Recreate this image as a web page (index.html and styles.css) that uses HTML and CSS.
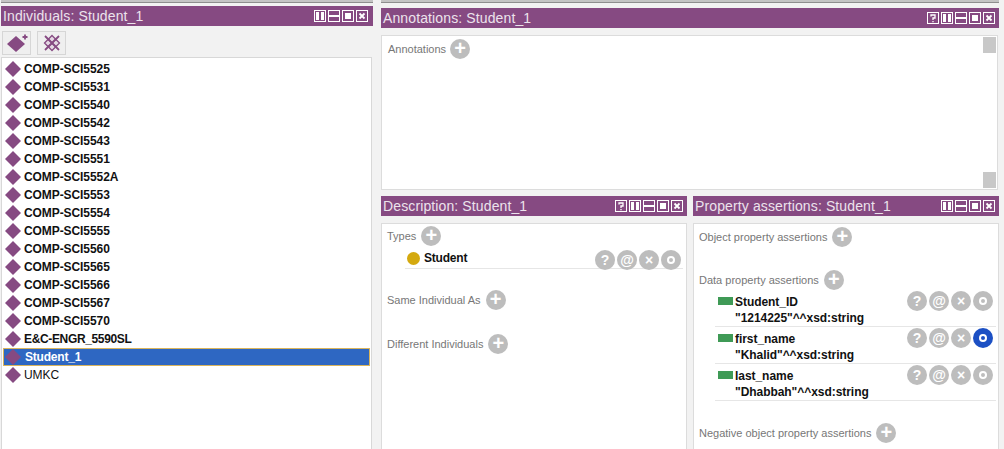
FILE: index.html
```html
<!DOCTYPE html>
<html lang="en">
<head>
<meta charset="utf-8">
<title>Individuals: Student_1</title>
<link rel="stylesheet" href="styles.css">
</head>
<body>
<svg class="defs" width="0" height="0" aria-hidden="true">
  <symbol id="w-help" viewBox="0 0 12 12"><rect x=".5" y=".5" width="11" height="11" fill="none" stroke="#fff"/><path d="M4 4.500V3h4V6H6v2M6 9v1.200" fill="none" stroke="#fff" stroke-width="1.300"/></symbol>
  <symbol id="w-vsplit" viewBox="0 0 12 12"><rect x=".5" y=".5" width="11" height="11" fill="none" stroke="#fff"/><rect x="2" y="2" width="3" height="8" fill="#fff"/><rect x="7" y="2" width="3" height="8" fill="#fff"/></symbol>
  <symbol id="w-hsplit" viewBox="0 0 12 12"><rect x=".5" y=".5" width="11" height="11" fill="none" stroke="#fff"/><rect x="1" y="5" width="10" height="2" fill="#fff"/></symbol>
  <symbol id="w-max" viewBox="0 0 12 12"><rect x=".5" y=".5" width="11" height="11" fill="none" stroke="#fff"/><rect x="3" y="3" width="6" height="6" fill="#fff"/></symbol>
  <symbol id="w-close" viewBox="0 0 12 12"><rect x=".5" y=".5" width="11" height="11" fill="none" stroke="#fff"/><path d="M3.500 3.500l5 5M8.500 3.500l-5 5" stroke="#fff" stroke-width="1.800"/></symbol>
  <symbol id="ind" viewBox="0 0 16 16"><path d="M8 0 16 8 8 16 0 8z" fill="#864a82"/></symbol>
</svg>

<div class="topstrip">
  <div class="tab tab-left"></div>
  <div class="tab tab-right"></div>
</div>

<main class="app">
  <section class="left">
    <header class="bar">
      <span class="bar-title">Individuals: Student_1</span>
      <span class="bar-icons">
        <svg><use href="#w-vsplit"/></svg><svg><use href="#w-hsplit"/></svg><svg><use href="#w-max"/></svg><svg><use href="#w-close"/></svg>
      </span>
    </header>
    <div class="toolbar">
      <button class="tool" type="button" aria-label="Add individual">
        <svg width="27" height="21" viewBox="0 0 27 21"><path d="M13 3 22 11 13 19 4 11z" fill="#864a82"/><path d="M22 1.500v5M19.500 4h5" stroke="#864a82" stroke-width="1.800"/></svg>
      </button>
      <button class="tool" type="button" aria-label="Delete individual">
        <svg width="20" height="20" viewBox="0 0 20 20"><path d="M10 2.500 17.500 10 10 17.500 2.500 10z" fill="#e4d8e3" stroke="#864a82" stroke-width="1.300"/><path d="M6.200 6.200 13.800 13.800M13.800 6.200 6.200 13.800" stroke="#864a82" stroke-width="1.300" fill="none"/><path d="M3 3 17 17M17 3 3 17" stroke="#864a82" stroke-width="1.800"/></svg>
      </button>
    </div>
    <ul class="list">
      <li class="row"><svg class="gem"><use href="#ind"/></svg>COMP-SCI5525</li>
      <li class="row"><svg class="gem"><use href="#ind"/></svg>COMP-SCI5531</li>
      <li class="row"><svg class="gem"><use href="#ind"/></svg>COMP-SCI5540</li>
      <li class="row"><svg class="gem"><use href="#ind"/></svg>COMP-SCI5542</li>
      <li class="row"><svg class="gem"><use href="#ind"/></svg>COMP-SCI5543</li>
      <li class="row"><svg class="gem"><use href="#ind"/></svg>COMP-SCI5551</li>
      <li class="row"><svg class="gem"><use href="#ind"/></svg>COMP-SCI5552A</li>
      <li class="row"><svg class="gem"><use href="#ind"/></svg>COMP-SCI5553</li>
      <li class="row"><svg class="gem"><use href="#ind"/></svg>COMP-SCI5554</li>
      <li class="row"><svg class="gem"><use href="#ind"/></svg>COMP-SCI5555</li>
      <li class="row"><svg class="gem"><use href="#ind"/></svg>COMP-SCI5560</li>
      <li class="row"><svg class="gem"><use href="#ind"/></svg>COMP-SCI5565</li>
      <li class="row"><svg class="gem"><use href="#ind"/></svg>COMP-SCI5566</li>
      <li class="row"><svg class="gem"><use href="#ind"/></svg>COMP-SCI5567</li>
      <li class="row"><svg class="gem"><use href="#ind"/></svg>COMP-SCI5570</li>
      <li class="row tight"><svg class="gem"><use href="#ind"/></svg>E&amp;C-ENGR_5590SL</li>
      <li class="row selected"><svg class="gem"><use href="#ind"/></svg>Student_1</li>
      <li class="row plain"><svg class="gem"><use href="#ind"/></svg>UMKC</li>
    </ul>
  </section>

  <section class="right">
    <div class="annot">
      <header class="bar">
        <span class="bar-title">Annotations: Student_1</span>
        <span class="bar-icons">
          <svg><use href="#w-help"/></svg><svg><use href="#w-vsplit"/></svg><svg><use href="#w-hsplit"/></svg><svg><use href="#w-max"/></svg><svg><use href="#w-close"/></svg>
        </span>
      </header>
      <div class="panel annot-panel">
        <div class="sec"><span>Annotations</span><i class="plus">+</i></div>
        <div class="scroll">
          <span class="thumb"></span>
          <span class="thumb"></span>
        </div>
      </div>
    </div>

    <div class="lower">
      <div class="col">
        <header class="bar">
          <span class="bar-title">Description: Student_1</span>
          <span class="bar-icons">
            <svg><use href="#w-help"/></svg><svg><use href="#w-vsplit"/></svg><svg><use href="#w-hsplit"/></svg><svg><use href="#w-max"/></svg><svg><use href="#w-close"/></svg>
          </span>
        </header>
        <div class="panel desc">
          <div class="sec"><span>Types</span><i class="plus">+</i></div>
          <div class="item item-type">
            <span class="dot"></span><b class="item-name">Student</b>
            <span class="acts"><i>?</i><i>@</i><i>×</i><i class="o"></i></span>
          </div>
          <div class="sec sec-same"><span>Same Individual As</span><i class="plus">+</i></div>
          <div class="sec sec-diff"><span>Different Individuals</span><i class="plus">+</i></div>
        </div>
      </div>

      <div class="col">
        <header class="bar">
          <span class="bar-title">Property assertions: Student_1</span>
          <span class="bar-icons">
            <svg><use href="#w-vsplit"/></svg><svg><use href="#w-hsplit"/></svg><svg><use href="#w-max"/></svg><svg><use href="#w-close"/></svg>
          </span>
        </header>
        <div class="panel props">
          <div class="sec"><span>Object property assertions</span><i class="plus">+</i></div>
          <div class="sec sec-data"><span>Data property assertions</span><i class="plus">+</i></div>
          <div class="item item-prop">
            <span class="rect"></span>
            <div class="val"><b>Student_ID</b><b>"1214225"^^xsd:string</b></div>
            <span class="acts"><i>?</i><i>@</i><i>×</i><i class="o"></i></span>
          </div>
          <div class="item item-prop">
            <span class="rect"></span>
            <div class="val"><b>first_name</b><b>"Khalid"^^xsd:string</b></div>
            <span class="acts"><i>?</i><i>@</i><i>×</i><i class="o on"></i></span>
          </div>
          <div class="item item-prop">
            <span class="rect"></span>
            <div class="val"><b>last_name</b><b>"Dhabbah"^^xsd:string</b></div>
            <span class="acts"><i>?</i><i>@</i><i>×</i><i class="o"></i></span>
          </div>
          <div class="sec sec-neg"><span>Negative object property assertions</span><i class="plus">+</i></div>
        </div>
      </div>
    </div>
  </section>
</main>
</body>
</html>
```
FILE: styles.css
```css
* { box-sizing: border-box; }
*::after { box-sizing: border-box; }
html, body { margin: 0; height: 449px; overflow: hidden; }
body {
  background: #f2f2f2;
  font-family: "Liberation Sans", Arial, sans-serif;
  font-size: 12px;
  color: #111;
}
.defs { display: block; height: 0; }

.topstrip {
  height: 3px;
  display: flex;
  background: #f2f2f2;
}
.tab { height: 3px; background: #c4c4c4; border-bottom: 1px solid #8e8e8e; }
.tab-left { width: 372px; margin-left: 1px; }
.tab-right { width: 618px; margin-left: 8px; }

.app { display: flex; height: 446px; padding-left: 1px; }
.left { width: 371px; padding-top: 3px; }
.right { width: 618px; margin-left: 9px; padding-top: 5px; }

.bar {
  height: 20px;
  background: #864a82;
  display: flex;
  align-items: center;
  justify-content: space-between;
  padding: 0 4px 0 2px;
}
.left .bar { width: 372px; padding-right: 5px; }
.bar-title {
  color: #ece3ec;
  font-size: 14px;
  letter-spacing: .12px;
  white-space: nowrap;
}
.bar-icons { display: flex; gap: 2px; }
.bar-icons svg { width: 12px; height: 12px; display: block; }

.toolbar { display: flex; gap: 6px; padding: 5px 0 0 1px; height: 31px; }
.tool {
  width: 29px;
  height: 24px;
  padding: 0;
  background: #efefef;
  border: 1px solid #d6d6d6;
  display: flex;
  align-items: center;
  justify-content: center;
}

.list {
  list-style: none;
  margin: 0;
  padding: 2px 0 0 0;
  height: 400px;
  width: 371px;
  background: #fff;
  border: 1px solid #d8d8d8;
}
.row {
  height: 18px;
  display: flex;
  align-items: center;
  gap: 3px;
  padding-left: 3px;
  font-weight: bold;
  font-size: 12px;
  letter-spacing: -.08px;
  color: #111;
}
.gem { width: 16px; height: 16px; flex: none; }
.row.tight { letter-spacing: -.35px; }
.row.plain { font-weight: normal; }
.row.selected {
  background: #2e67c2;
  color: #fff;
  border: 1px solid #d9b45c;
  margin: 0 1px;
  padding-left: 1px;
  gap: 4px;
  letter-spacing: -.2px;
}

.panel {
  background: #fff;
  border: 1px solid #dcdcdc;
  position: relative;
  font-size: 11px;
}
.annot-panel { height: 155px; margin-top: 7px; width: 617px; padding: 3px 6px; }
.annot-panel .sec { gap: 4px; }
.scroll {
  position: absolute;
  top: 0;
  right: 0;
  bottom: 0;
  width: 15px;
  display: flex;
  flex-direction: column;
  justify-content: space-between;
  padding: 1px 0 1px 1px;
}
.thumb { height: 16px; width: 13px; background: #c8c8c8; }

.sec { display: flex; align-items: center; gap: 5px; height: 20px; color: #777; font-size: 11px; }
.plus {
  width: 20px;
  height: 20px;
  border-radius: 50%;
  background: #bdbdbd;
  color: #fff;
  font: bold 20px/19px "Liberation Sans", Arial, sans-serif;
  text-align: center;
  flex: none;
}

.lower { display: flex; gap: 6px; margin-top: 6px; }
.col { width: 306px; }
.panel.desc, .panel.props { margin-top: 7px; height: 240px; padding: 3px 5px; }
.panel.desc { padding-top: 2px; }

.item { display: flex; position: relative; border-bottom: 1px solid #e6e6e6; margin-left: 18px; }
.item-type { height: 21px; margin-top: 2px; align-items: center; padding-left: 2px; margin-right: -2px; }
.dot { width: 13px; height: 13px; border-radius: 50%; background: #d4a90f; margin-right: 4px; flex: none; }
.item-name { font-size: 12px; color: #111; letter-spacing: -.2px; }

.sec-same { margin-top: 21px; }
.sec-diff { margin-top: 24px; }

.sec-data { margin-top: 23px; }
.item-prop { height: 37px; padding: 4px 0 0 3px; margin-left: 16px; margin-right: -3px; }
.rect { width: 15px; height: 8px; background: #3f9a56; margin: 3px 2px 0 0; flex: none; }
.val { display: flex; flex-direction: column; font-size: 12px; line-height: 16px; }
.val b { display: block; white-space: nowrap; letter-spacing: -.05px; }
.sec-neg { margin-top: 22px; }

.acts {
  position: absolute;
  right: 2px;
  top: 2px;
  display: flex;
  gap: 2px;
}
.item-prop .acts { top: 1px; right: 3px; }
.acts i {
  width: 20px;
  height: 20px;
  border-radius: 50%;
  background: #bdbdbd;
  color: #fff;
  font: bold 14px/20px "Liberation Sans", Arial, sans-serif;
  text-align: center;
  display: flex;
  align-items: center;
  justify-content: center;
}
.acts .o::after {
  content: "";
  width: 8px;
  height: 8px;
  border: 2px solid #fff;
  border-radius: 50%;
}
.acts .o.on { background: #1c50c4; }
```
